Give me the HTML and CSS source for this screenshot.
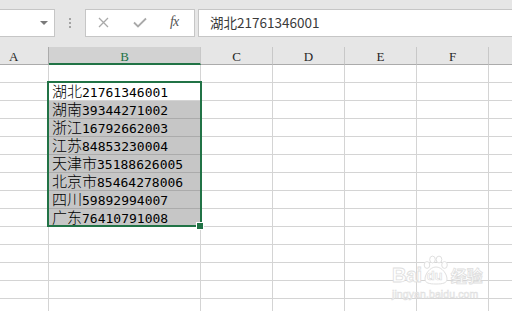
FILE: index.html
```html
<!DOCTYPE html>
<html lang="zh-CN">
<head>
<meta charset="utf-8">
<title>Excel</title>
<link rel="stylesheet" href="styles.css">
</head>
<body>
<div class="app">
  <div class="toolbar">
    <div class="namebox">
      <svg class="caret" width="8" height="4" viewBox="0 0 8 4"><path d="M0 0H8L4 4Z" fill="#7a7a7a"/></svg>
    </div>
    <div class="grip"><i></i><i></i><i></i></div>
    <div class="fxbox">
      <svg class="ico-x" width="11" height="11" viewBox="0 0 11 11"><path d="M1 1L10 10M10 1L1 10" stroke="#a9a9a9" stroke-width="1.3" fill="none"/></svg>
      <svg class="ico-ok" width="14" height="11" viewBox="0 0 14 11"><path d="M1 5.5L5 9.5L13 1.5" stroke="#a9a9a9" stroke-width="1.8" fill="none"/></svg>
      <span class="fx">fx</span>
    </div>
    <div class="formula">湖北21761346001</div>
  </div>
  <div class="sheet">
    <div class="grid">
      <div class="hd hd-a">A</div><div class="hd hd-on">B</div><div class="hd">C</div><div class="hd">D</div><div class="hd">E</div><div class="hd">F</div><div class="hd"></div>

      <div class="c"></div><div class="c"></div><div class="c"></div><div class="c"></div><div class="c"></div><div class="c"></div><div class="c"></div>

      <div class="c"></div><div class="c txt"><span class="zh">湖北</span>21761346001</div><div class="c"></div><div class="c"></div><div class="c"></div><div class="c"></div><div class="c"></div>
      <div class="c"></div><div class="c txt sel"><span class="zh">湖南</span>39344271002</div><div class="c"></div><div class="c"></div><div class="c"></div><div class="c"></div><div class="c"></div>
      <div class="c"></div><div class="c txt sel"><span class="zh">浙江</span>16792662003</div><div class="c"></div><div class="c"></div><div class="c"></div><div class="c"></div><div class="c"></div>
      <div class="c"></div><div class="c txt sel"><span class="zh">江苏</span>84853230004</div><div class="c"></div><div class="c"></div><div class="c"></div><div class="c"></div><div class="c"></div>
      <div class="c"></div><div class="c txt sel"><span class="zh">天津市</span>35188626005</div><div class="c"></div><div class="c"></div><div class="c"></div><div class="c"></div><div class="c"></div>
      <div class="c"></div><div class="c txt sel"><span class="zh">北京市</span>85464278006</div><div class="c"></div><div class="c"></div><div class="c"></div><div class="c"></div><div class="c"></div>
      <div class="c"></div><div class="c txt sel"><span class="zh">四川</span>59892994007</div><div class="c"></div><div class="c"></div><div class="c"></div><div class="c"></div><div class="c"></div>
      <div class="c"></div><div class="c txt sel"><span class="zh">广东</span>76410791008</div><div class="c"></div><div class="c"></div><div class="c"></div><div class="c"></div><div class="c"></div>

      <div class="c"></div><div class="c"></div><div class="c"></div><div class="c"></div><div class="c"></div><div class="c"></div><div class="c"></div>
      <div class="c"></div><div class="c"></div><div class="c"></div><div class="c"></div><div class="c"></div><div class="c"></div><div class="c"></div>
      <div class="c"></div><div class="c"></div><div class="c"></div><div class="c"></div><div class="c"></div><div class="c"></div><div class="c"></div>
      <div class="c"></div><div class="c"></div><div class="c"></div><div class="c"></div><div class="c"></div><div class="c"></div><div class="c"></div>
      <div class="c"></div><div class="c"></div><div class="c"></div><div class="c"></div><div class="c"></div><div class="c"></div><div class="c"></div>
    </div>
    <div class="selection"><div class="handle"></div></div>
    <div class="watermark">
      <div class="wm-top">
        <span class="wm-bai">Bai</span>
        <span class="wm-paw">
          <svg width="28" height="30" viewBox="0 0 28 30">
            <g fill="#fff" stroke="#e0e0e0" stroke-width="1">
              <ellipse cx="5" cy="10" rx="2.8" ry="3.4"/>
              <ellipse cx="10.5" cy="4.5" rx="2.8" ry="3.4"/>
              <ellipse cx="17" cy="4.5" rx="2.8" ry="3.4"/>
              <ellipse cx="22.5" cy="10" rx="2.8" ry="3.4"/>
              <path d="M14 12C8 12 3 19 3 24C3 28 7 29 14 29C21 29 25 28 25 24C25 19 20 12 14 12Z"/>
            </g>
          </svg>
          <span class="wm-du">du</span>
        </span>
        <span class="wm-jy">经验</span>
      </div>
      <div class="wm-url">jingyan.baidu.com</div>
    </div>
  </div>
</div>
</body>
</html>
```

FILE: styles.css
```css
html, body {
  margin: 0;
  padding: 0;
  background: #ffffff;
}

.app {
  width: 512px;
  height: 311px;
  overflow: hidden;
}

.toolbar {
  height: 47px;
  background: #e6e6e6;
  display: flex;
  align-items: flex-start;
  padding-top: 9px;
  box-sizing: border-box;
}

.namebox {
  width: 56px;
  height: 28px;
  margin-left: -1px;
  box-sizing: border-box;
  border: 1px solid #c6c6c6;
  background: #ffffff;
  display: flex;
  justify-content: flex-end;
  align-items: flex-start;
  padding: 11px 6px 0 0;
}

.grip {
  margin: 9px 0 0 14px;
  width: 2px;
  display: flex;
  flex-direction: column;
  gap: 2px;
}

.grip i {
  display: block;
  width: 2px;
  height: 2px;
  background: #a3a3a3;
}

.fxbox {
  margin-left: 14px;
  width: 110px;
  height: 28px;
  box-sizing: border-box;
  border: 1px solid #c6c6c6;
  background: #ffffff;
  display: flex;
  align-items: center;
  padding-left: 12px;
}

.ico-x {
  margin-top: -1px;
}

.ico-ok {
  margin-left: 24px;
  margin-top: -1px;
}

.fx {
  margin-left: 23px;
  font-family: "Liberation Serif", serif;
  font-style: italic;
  font-size: 14px;
  color: #555555;
  letter-spacing: -1px;
  margin-top: -2px;
}

.formula {
  flex: 1;
  margin-left: 3px;
  height: 28px;
  box-sizing: border-box;
  border: 1px solid #c6c6c6;
  border-right: none;
  background: #ffffff;
  padding-left: 11px;
  font-family: "Noto Sans CJK SC", sans-serif;
  font-size: 13.5px;
  line-height: 25px;
  color: #3a3a3a;
}

.sheet {
  position: relative;
}

.grid {
  display: grid;
  grid-template-columns: 49px 152px 72px 72px 72px 72px 40px;
  grid-auto-rows: 18px;
}

.hd {
  box-sizing: border-box;
  height: 18px;
  border-right: 1px solid #c8c8c8;
  border-bottom: 1px solid #ababab;
  background: #e6e6e6;
  font-family: "Liberation Serif", serif;
  font-size: 13px;
  line-height: 17px;
  padding-top: 1px;
  text-align: center;
  color: #262626;
}

.hd-a {
  text-align: left;
  padding-left: 9px;
  border-right-color: #ababab;
}

.hd-on {
  background: #d2d2d2;
  color: #217346;
  border-bottom: 2px solid #217346;
}

.c {
  box-sizing: border-box;
  height: 18px;
  border-right: 1px solid #d4d4d4;
  border-bottom: 1px solid #d4d4d4;
}

.txt {
  font-family: "DejaVu Sans Mono", monospace;
  font-size: 13px;
  line-height: 17px;
  padding-left: 3px;
  color: #000000;
  white-space: nowrap;
  overflow: hidden;
}

.zh {
  font-family: "Noto Sans CJK SC", sans-serif;
  font-size: 15px;
  line-height: 15px;
  font-weight: 300;
}

.sel {
  background: #c6c6c6;
  border-bottom-color: #ababab;
}

.selection {
  position: absolute;
  left: 47px;
  top: 34px;
  width: 155px;
  height: 146px;
  box-sizing: border-box;
  border: 2px solid #217346;
}

.handle {
  position: absolute;
  left: 147px;
  top: 139px;
  width: 6px;
  height: 6px;
  background: #217346;
  border: 1px solid #ffffff;
}

.watermark {
  position: absolute;
  left: 392px;
  top: 207px;
  color: #ffffff;
  font-family: "Liberation Sans", sans-serif;
  font-weight: bold;
  white-space: nowrap;
}

.wm-top {
  display: flex;
  align-items: flex-end;
  height: 31px;
}

.wm-bai {
  font-size: 20px;
  line-height: 20px;
  -webkit-text-stroke: 0.8px #dedede;
  letter-spacing: -0.5px;
}

.wm-paw {
  position: relative;
  width: 27px;
  height: 30px;
  margin-left: 1px;
}

.wm-paw svg {
  position: absolute;
  left: -1px;
  top: 0;
}

.wm-du {
  position: absolute;
  left: 4px;
  top: 14px;
  font-size: 13px;
  line-height: 14px;
  -webkit-text-stroke: 0.6px #dadada;
}

.wm-jy {
  font-family: "Noto Sans CJK SC", sans-serif;
  font-size: 16px;
  line-height: 20px;
  margin-left: 1px;
  -webkit-text-stroke: 0.8px #dedede;
}

.wm-url {
  margin-top: 3px;
  font-size: 10.5px;
  line-height: 12px;
  font-weight: normal;
  -webkit-text-stroke: 0.6px #e0e0e0;
  letter-spacing: 0.1px;
}
```
